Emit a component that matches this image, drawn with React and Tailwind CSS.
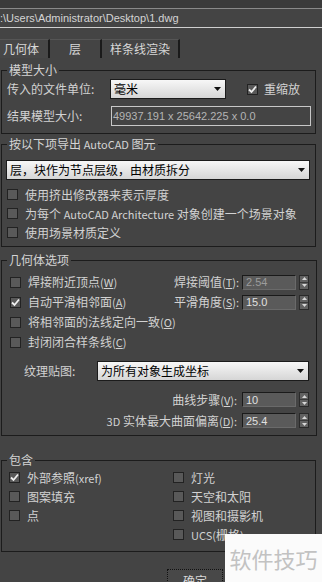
import React from 'react';

const CJK = "font-['Noto_Sans_CJK_SC',sans-serif]";

// latin run inside chinese text, drawn a bit smaller as in the dialog
const L = ({ children }) => <span className="text-[11px]">{children}</span>;

const Check = ({ checked }) => (
  <span className="w-[11px] h-[11px] shrink-0 flex items-center justify-center border border-[#222] bg-[#595959]">
    {checked && (
      <svg width="9" height="9" viewBox="0 0 9 9">
        <path d="M1 4.5 L3.5 7 L8 1.5" fill="none" stroke="#f0f0f0" strokeWidth="1.8" />
      </svg>
    )}
  </span>
);

const Arrow = () => (
  <svg width="7" height="4" viewBox="0 0 7 4">
    <polygon points="0,0 7,0 3.5,4" fill="#111" />
  </svg>
);

const Select = ({ value, w }) => (
  <div className={`${w} h-[20px] flex items-center justify-between border border-[#1b1b1b] bg-linear-to-b from-[#f7f7f7] to-[#d6d6d6] pl-[3px] pr-[4px]`}>
    <span className="text-[12px] leading-[16px] text-black">{value}</span>
    <Arrow />
  </div>
);

const Spinner = ({ value, dim }) => (
  <div className="flex items-center gap-[3px]">
    <div
      className={`w-[54px] h-[15px] flex items-center pl-[3px] bg-[#5a5a5a] border border-t-[#1a1a1a] border-l-[#1a1a1a] border-r-[#6a6a6a] border-b-[#6a6a6a] text-[11px] font-['Liberation_Sans',sans-serif] ${dim ? 'text-[#9c9c9c]' : 'text-[#e0e0e0]'}`}
    >
      {value}
    </div>
    <div className="w-[10px] h-[15px] flex flex-col border border-[#2a2a2a] bg-[#626262]">
      <div className="flex-1 flex items-center justify-center border-b border-[#3a3a3a]">
        <svg width="5" height="3" viewBox="0 0 5 3"><polygon points="0,3 5,3 2.5,0" fill="#d8d8d8" /></svg>
      </div>
      <div className="flex-1 flex items-center justify-center">
        <svg width="5" height="3" viewBox="0 0 5 3"><polygon points="0,0 5,0 2.5,3" fill="#d8d8d8" /></svg>
      </div>
    </div>
  </div>
);

const Group = ({ title, children }) => (
  <fieldset className="ml-[1px] w-[315px] border border-[#1c1c1c]">
    <legend className="ml-[5px] px-[2px] text-[12px] leading-[14px] text-[#d4d4d4]">{title}</legend>
    {children}
  </fieldset>
);

const CheckRow = ({ checked, children, h = 'h-[19px]' }) => (
  <div className={`${h} flex items-center gap-[7px]`}>
    <Check checked={checked} />
    <span className="text-[12px] leading-[16px] text-[#d2d2d2]">{children}</span>
  </div>
);

export default function App() {
  return (
    <div className={`relative w-[322px] h-[582px] overflow-hidden bg-[#444444] ${CJK}`}>
      {/* path bar */}
      <div className="h-[9px] bg-[#3b3b3b] border-b border-[#8a8a8a]" />
      <div className="h-[19px] flex items-center border-b border-[#cfcfcf] text-[11px] text-[#d4d4d4] font-['Liberation_Sans',sans-serif]">
        :\Users\Administrator\Desktop\1.dwg
      </div>

      {/* tabs */}
      <div className="mt-[11px] h-[19px] flex text-[12px] leading-[16px] text-[#d8d8d8]">
        <div className="w-[50px] flex items-center pl-[3px] border-t border-[#555] border-r-2 border-r-[#1a1a1a] bg-[#474747]">几何体</div>
        <div className="w-[52px] flex items-center justify-center border-t border-[#555] border-r-2 border-r-[#1a1a1a]">层</div>
        <div className="w-[78px] flex items-center justify-center border-t border-[#555] border-r-2 border-r-[#1a1a1a]">样条线渲染</div>
      </div>

      {/* 模型大小 */}
      <div className="mt-[5px]">
        <Group title="模型大小">
          <div className="pl-[5px] pt-[2px] pb-[7px] text-[12px] leading-[16px] text-[#d2d2d2]">
            <div className="h-[20px] flex items-center">
              <span className="w-[103px]">传入的文件单位:</span>
              <Select value="毫米" w="w-[116px]" />
              <span className="ml-[21px]"><Check checked /></span>
              <span className="ml-[6px]">重缩放</span>
            </div>
            <div className="mt-[7px] h-[20px] flex items-center">
              <span className="w-[104px]">结果模型大小:</span>
              <div className="w-[200px] h-[20px] flex items-center pl-[1px] border border-[#c8c8c8] text-[11px] text-[#b4b4b4] font-['Liberation_Sans',sans-serif]">
                49937.191 x 25642.225 x 0.0
              </div>
            </div>
          </div>
        </Group>
      </div>

      {/* 导出图元 */}
      <div className="mt-[3px]">
        <Group title={<>按以下项导出 <L>AutoCAD</L> 图元</>}>
          <div className="pl-[4px] pt-[9px] pb-[4px]">
            <Select value="层，块作为节点层级，由材质拆分" w="w-[304px]" />
            <div className="mt-[5px] pl-[1px]">
              <CheckRow>使用挤出修改器来表示厚度</CheckRow>
              <CheckRow>为每个 <L>AutoCAD Architecture</L> 对象创建一个场景对象</CheckRow>
              <CheckRow>使用场景材质定义</CheckRow>
            </div>
          </div>
        </Group>
      </div>

      {/* 几何体选项 */}
      <div className="mt-[6px]">
        <Group title="几何体选项">
          <div className="pl-[8px] pr-[7px] pt-[5px] pb-[7px] text-[12px] leading-[16px] text-[#d2d2d2]">
            <div className="h-[20px] flex items-center justify-between">
              <CheckRow h="h-[20px]">焊接附近顶点<L>(<u>W</u>)</L></CheckRow>
              <div className="flex items-center gap-[3px]">
                <span>焊接阈值<L>(<u>T</u>):</L></span>
                <Spinner value="2.54" dim />
              </div>
            </div>
            <div className="h-[20px] flex items-center justify-between">
              <CheckRow checked h="h-[20px]">自动平滑相邻面<L>(<u>A</u>)</L></CheckRow>
              <div className="flex items-center gap-[3px]">
                <span>平滑角度<L>(<u>S</u>):</L></span>
                <Spinner value="15.0" />
              </div>
            </div>
            <CheckRow h="h-[20px]">将相邻面的法线定向一致<L>(<u>O</u>)</L></CheckRow>
            <CheckRow h="h-[20px]">封闭闭合样条线<L>(<u>C</u>)</L></CheckRow>

            <div className="mt-[9px] h-[20px] flex items-center">
              <span className="ml-[14px] w-[73px]">纹理贴图:</span>
              <Select value="为所有对象生成坐标" w="w-[212px]" />
            </div>
            <div className="mt-[11px] h-[15px] flex items-center justify-end gap-[5px]">
              <span>曲线步骤<L>(<u>V</u>):</L></span>
              <Spinner value="10" />
            </div>
            <div className="mt-[6px] h-[15px] flex items-center justify-end gap-[5px]">
              <span><L>3D</L> 实体最大曲面偏离<L>(<u>D</u>):</L></span>
              <Spinner value="25.4" />
            </div>
          </div>
        </Group>
      </div>

      {/* 包含 */}
      <div className="mt-[17px]">
        <Group title="包含">
          <div className="pl-[7px] pt-[1px] pb-[7px] grid grid-cols-[164px_1fr]">
            <div>
              <CheckRow checked>外部参照<L>(xref)</L></CheckRow>
              <CheckRow>图案填充</CheckRow>
              <CheckRow>点</CheckRow>
            </div>
            <div>
              <CheckRow>灯光</CheckRow>
              <CheckRow>天空和太阳</CheckRow>
              <CheckRow>视图和摄影机</CheckRow>
              <CheckRow><L>UCS(</L>栅格<L>)</L></CheckRow>
            </div>
          </div>
        </Group>
      </div>

      {/* buttons */}
      <div className="mt-[17px] flex">
        <button className="ml-[167px] w-[56px] h-[24px] flex justify-center pt-[3px] border border-dotted border-[#111] bg-[#484848] text-[12px] leading-[16px] text-[#d8d8d8]">
          确定
        </button>
      </div>

      {/* watermark */}
      <div className="absolute left-[225px] top-[534px] w-[97px] h-[48px] flex items-center justify-center bg-[#fbfbfb] text-[22px] text-[#c2c2c2]">
        软件技巧
      </div>
    </div>
  );
}
